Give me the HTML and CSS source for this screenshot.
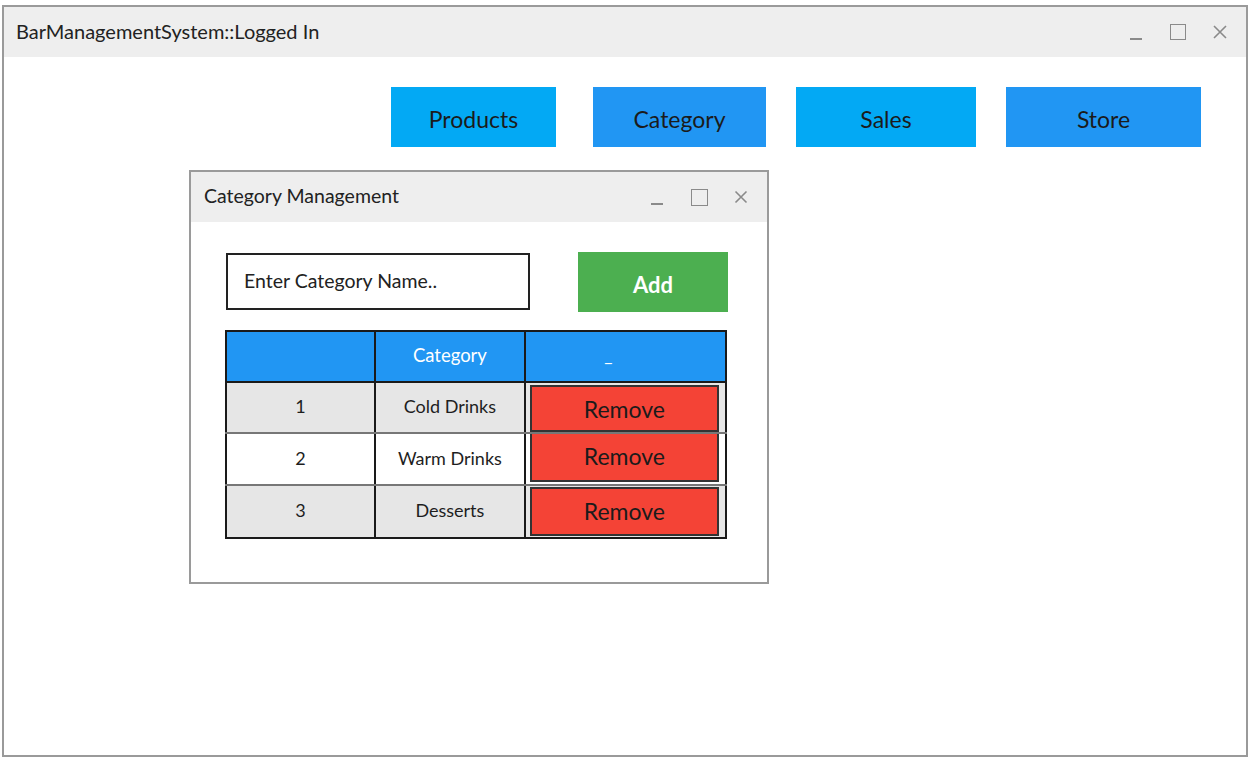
FILE: index.html
```html
<!DOCTYPE html>
<html>
<head>
<meta charset="utf-8">
<link rel="stylesheet" href="styles.css">
</head>
<body>
<div class="window">
  <div class="titlebar">
    <span class="title">BarManagementSystem::Logged In</span>
    <div class="controls">
      <span class="ctl min"></span>
      <span class="ctl max"></span>
      <svg class="ctl close" width="14" height="14" viewBox="0 0 14 14"><path d="M1 1L13 13M13 1L1 13" stroke="#8a8a8a" stroke-width="1.6" fill="none"/></svg>
    </div>
  </div>
  <div class="content">
    <nav class="nav">
      <div class="navbtn light b-products">Products</div>
      <div class="navbtn dark b-category">Category</div>
      <div class="navbtn light b-sales">Sales</div>
      <div class="navbtn dark b-store">Store</div>
    </nav>
    <div class="subwin">
      <div class="subtitlebar">
        <span class="subtitle">Category Management</span>
        <div class="controls small">
          <span class="ctl min"></span>
          <span class="ctl max"></span>
          <svg class="ctl close" width="14" height="14" viewBox="0 0 14 14"><path d="M1.5 1.5L12.5 12.5M12.5 1.5L1.5 12.5" stroke="#8a8a8a" stroke-width="1.6" fill="none"/></svg>
        </div>
      </div>
      <div class="subbody">
        <div class="formrow">
          <div class="input">Enter Category Name..</div>
          <div class="addbtn">Add</div>
        </div>
        <table class="grid">
          <tr class="head"><th class="c1"></th><th class="c2">Category</th><th class="c3"><span class="dash">_</span></th></tr>
          <tr class="r1 grey"><td class="c1">1</td><td class="c2">Cold Drinks</td><td class="c3"><div class="remove rm1">Remove</div></td></tr>
          <tr class="r2 white"><td class="c1">2</td><td class="c2">Warm Drinks</td><td class="c3"><div class="remove rm2">Remove</div></td></tr>
          <tr class="r3 grey"><td class="c1">3</td><td class="c2">Desserts</td><td class="c3"><div class="remove rm3">Remove</div></td></tr>
        </table>
      </div>
    </div>
  </div>
</div>
</body>
</html>
```
FILE: styles.css
```css
* { box-sizing: border-box; }
html, body { margin: 0; padding: 0; background: #fff; }
body { font-family: "Lato", "Liberation Sans", sans-serif; color: #1e1e1e; }

.window {
  margin: 5px 0 0 2px;
  width: 1246px;
  height: 752px;
  border: 2px solid #9a9a9a;
  background: #fff;
}
.titlebar {
  height: 50px;
  background: #eeeeee;
  display: flex;
  align-items: center;
  justify-content: space-between;
  padding: 0 0 0 12px;
}
.title { font-size: 20px; color: #222; margin-top: -2px; }
.controls { display: flex; align-items: center; }
.controls .ctl { display: block; }
.controls .min { width: 12px; height: 2px; background: #8a8a8a; margin-top: 14px; margin-right: 28px; }
.controls .max { width: 16px; height: 16px; border: 1.6px solid #8a8a8a; margin-right: 27px; }
.controls .close { margin-right: 19px; }

.content { padding: 30px 0 0 0; }
.nav { display: flex; padding-left: 387px; height: 60px; }
.navbtn {
  height: 60px;
  display: flex; align-items: center; justify-content: center;
  font-size: 23px; color: #1b1b1b;
  padding-top: 3px;
}
.light { background: #03a9f4; }
.dark { background: #2196f3; }
.b-products { width: 165px; }
.b-category { width: 173px; margin-left: 37px; }
.b-sales { width: 180px; margin-left: 30px; }
.b-store { width: 195px; margin-left: 30px; }

.subwin {
  margin: 23px 0 0 185px;
  width: 580px;
  height: 414px;
  border: 2px solid #9a9a9a;
}
.subtitlebar {
  height: 50px;
  background: #eeeeee;
  display: flex; align-items: center; justify-content: space-between;
  padding-left: 13px;
}
.subtitle { font-size: 19.5px; color: #222; margin-top: -3px; }
.controls.small .min { width: 12px; height: 2px; margin-top: 14px; margin-right: 28px; }
.controls.small .max { width: 17px; height: 17px; margin-right: 26px; }
.controls.small .close { margin-right: 19px; }

.subbody { padding: 31px 0 0 34px; }
.formrow { display: flex; align-items: flex-start; height: 77px; }
.input {
  width: 304px; height: 57px;
  border: 2px solid #222;
  padding-left: 16px;
  display: flex; align-items: center;
  font-size: 19.5px; color: #222;
  margin-left: 1px;
  padding-bottom: 2px;
}
.addbtn {
  width: 150px; height: 60px;
  margin-left: 48px; margin-top: -1px;
  background: #4caf50;
  color: #fff;
  font-size: 22px; font-weight: bold;
  display: flex; align-items: center; justify-content: center;
  padding-top: 4px;
}

.grid {
  border-collapse: collapse;
  width: 502px;
  margin-left: 0;
}
.grid th, .grid td {
  border: 2px solid #1a1a1a;
  padding: 0 0 3px 0;
  text-align: center;
  font-size: 18px;
  font-weight: normal;
}
.grid .c1 { width: 150px; }
.grid .c2 { width: 150px; }
.grid .c3 { width: 202px; }
.head th { background: #2196f3; color: #fff; height: 51px; }
.head th.c2 { font-size: 18.5px; padding-bottom: 4px; }
.dash { position: relative; left: -17px; top: 0; }
.grid tr.r1 td { height: 51px; }
.grid tr.r2 td { height: 52px; }
.grid tr.r3 td { height: 53px; }
.grid tr.r1 td, .grid tr.r2 td { border-bottom-color: #777; }
.grey td { background: #e6e6e6; }
.white td { background: #fff; }
.grid td.c3 { vertical-align: top; padding: 0 6px 0 4px; }
.remove {
  background: #f44336;
  border: 2px solid #333;
  color: #1b1b1b;
  font-size: 23px;
  display: flex; align-items: center; justify-content: center;
}
.rm1 { height: 47px; margin-top: 2px; }
.rm2 { height: 50px; margin-top: -2px; padding-bottom: 3px; }
.rm3 { height: 49px; margin-top: 1px; padding-bottom: 2px; }
```
